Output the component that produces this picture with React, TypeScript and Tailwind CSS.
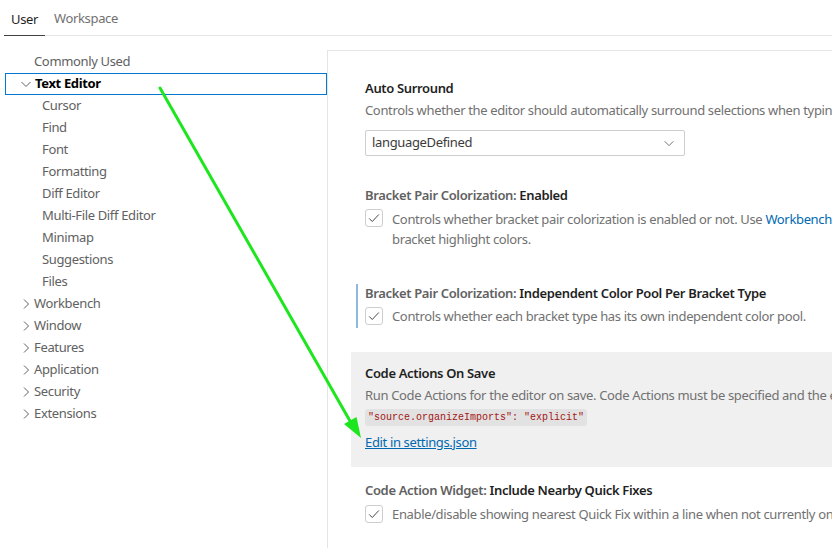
import React from 'react';

const font = { fontFamily: '"Noto Sans", "Open Sans", sans-serif' };

const Chevron = ({ open }: { open?: boolean }) => (
  <svg width="16" height="16" viewBox="0 0 16 16" className="shrink-0 text-[#616161]">
    {open ? (
      <path d="M3.5 6l4.5 4.5L12.5 6" fill="none" stroke="currentColor" strokeWidth="1" />
    ) : (
      <path d="M6 3.5l4.5 4.5L6 12.5" fill="none" stroke="currentColor" strokeWidth="1" />
    )}
  </svg>
);

const Checkbox = () => (
  <div className="w-[18px] h-[18px] shrink-0 rounded-[3px] border border-[#cecece] bg-white flex items-center justify-center">
    <svg width="14" height="14" viewBox="0 0 16 16">
      <path d="M2.5 8.5l3.5 3.5 7.5-8" fill="none" stroke="#424242" strokeWidth="1.1" />
    </svg>
  </div>
);

const treeTop = ['Cursor', 'Find', 'Font', 'Formatting', 'Diff Editor', 'Multi-File Diff Editor', 'Minimap', 'Suggestions', 'Files'];
const treeBottom = ['Workbench', 'Window', 'Features', 'Application', 'Security', 'Extensions'];

const App: React.FC = () => {
  return (
    <div className="relative w-[832px] h-[548px] overflow-hidden bg-white text-[13px] tracking-[-0.35px]" style={font}>
      {/* tabs */}
      <div className="ml-[4px] h-[36px] flex items-end border-b border-[#e5e5e5]">
        <div className="w-[41px] h-[36px] pt-[4px] flex items-center justify-center border-b border-[#424242] -mb-px text-[#1f1f1f]">User</div>
        <div className="h-[36px] pt-[4px] flex items-center pl-[9px] text-[#717171]">Workspace</div>
      </div>

      <div className="flex h-[512px]">
        {/* tree */}
        <div className="w-[322px] ml-[5px] pt-[15px] shrink-0 text-[#616161]">
          <div className="h-[22px] flex items-center pl-[29px]">Commonly Used</div>
          <div className="h-[22px] flex items-center pl-[12px] border border-[#0078d4] text-[#000] font-bold">
            <Chevron open />
            <span className="ml-[1px]">Text Editor</span>
          </div>
          {treeTop.map((t) => (
            <div key={t} className="h-[22px] flex items-center pl-[37px]">{t}</div>
          ))}
          {treeBottom.map((t) => (
            <div key={t} className="h-[22px] flex items-center pl-[13px]">
              <Chevron />
              <span>{t}</span>
            </div>
          ))}
        </div>

        {/* settings list */}
        <div className="flex-1 mt-[14px] border-l border-t border-[#e5e5e5] min-w-0">
          <div className="w-[640px]">
            {/* Auto Surround */}
            <div className="pl-[37px]">
              <div className="mt-[26px] h-[22px] leading-[22px] font-semibold text-[#1f1f1f]">Auto Surround</div>
              <div className="h-[22px] leading-[22px] whitespace-nowrap text-[#717171]">
                Controls whether the editor should automatically surround selections when typing quotes or brackets.
              </div>
              <div className="mt-[9px] w-[320px] h-[26px] border border-[#cecece] rounded-[2px] flex items-center justify-between pl-[6px] pr-[8px] text-[#3b3b3b]">
                <span>languageDefined</span>
                <svg width="14" height="14" viewBox="0 0 16 16">
                  <path d="M3 6l5 5 5-5" fill="none" stroke="#616161" strokeWidth="1" />
                </svg>
              </div>
            </div>

            {/* Bracket Pair Colorization: Enabled */}
            <div className="pl-[37px]">
              <div className="mt-[28px] h-[22px] leading-[22px] font-semibold text-[#1f1f1f]">
                <span className="text-[#616161]">Bracket Pair Colorization: </span>Enabled
              </div>
              <div className="mt-[3px] flex gap-[9px]">
                <Checkbox />
                <div className="leading-[20px] text-[#717171] whitespace-nowrap">
                  Controls whether bracket pair colorization is enabled or not. Use <span className="text-[#006ab1]">Workbench: Color Customizations</span> to override the
                  <br />
                  bracket highlight colors.
                </div>
              </div>
            </div>

            {/* Independent Color Pool */}
            <div className="mt-[35px] ml-[28px] border-l-2 border-[#8fb8de] pl-[7px] pb-[2px]">
              <div className="h-[18px] leading-[18px] font-semibold text-[#1f1f1f]">
                <span className="text-[#616161]">Bracket Pair Colorization: </span>Independent Color Pool Per Bracket Type
              </div>
              <div className="mt-[4px] flex gap-[9px]">
                <div className="mt-px"><Checkbox /></div>
                <div className="leading-[20px] text-[#717171] whitespace-nowrap">
                  Controls whether each bracket type has its own independent color pool.
                </div>
              </div>
            </div>

            {/* Code Actions On Save */}
            <div className="mt-[24px] ml-[23px] bg-[#f0f0f0] pl-[14px] pt-[10px] pb-[15px]">
              <div className="h-[22px] leading-[22px] font-semibold text-[#1f1f1f]">Code Actions On Save</div>
              <div className="h-[22px] leading-[22px] whitespace-nowrap text-[#717171]">
                Run Code Actions for the editor on save. Code Actions must be specified and the editor must not be shutting down.
              </div>
              <div className="h-[20px] pt-[2px] flex items-center">
                <span
                  className="bg-[#e2e2e2] rounded-[3px] px-[3px] h-[17px] leading-[17px] text-[10px] tracking-normal text-[#a31515] whitespace-pre"
                  style={{ fontFamily: '"Liberation Mono", "DejaVu Sans Mono", monospace' }}
                >
                  "source.organizeImports": "explicit"
                </span>
              </div>
              <div className="mt-[6px] h-[20px] leading-[20px] text-[#006ab1] underline">Edit in settings.json</div>
            </div>

            {/* Code Action Widget */}
            <div className="pl-[37px]">
              <div className="mt-[12px] h-[22px] leading-[22px] font-semibold text-[#1f1f1f]">
                <span className="text-[#616161]">Code Action Widget: </span>Include Nearby Quick Fixes
              </div>
              <div className="mt-[3px] flex gap-[9px]">
                <div className="mt-[1px]"><Checkbox /></div>
                <div className="leading-[20px] text-[#717171] whitespace-nowrap">
                  Enable/disable showing nearest Quick Fix within a line when not currently on a diagnostic.
                </div>
              </div>
            </div>
          </div>
        </div>
      </div>

      {/* annotation arrow */}
      <svg className="absolute inset-0 pointer-events-none" width="832" height="548">
        <line x1="160" y1="88" x2="354" y2="428" stroke="#1ee61e" strokeWidth="3" strokeLinecap="round" />
        <polygon points="361,438 356.5,417 344,424" fill="#1ee61e" />
      </svg>
    </div>
  );
};

export default App;
